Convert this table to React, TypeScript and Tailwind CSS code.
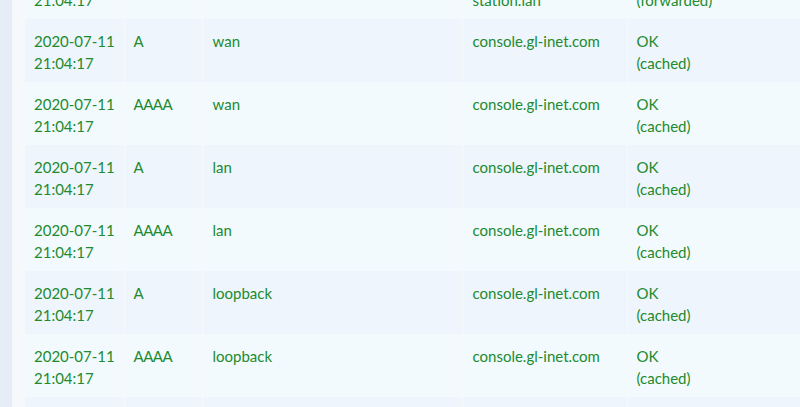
const rows = [
    { time: ['2020-07-11', '21:04:17'], type: 'A', iface: 'lan', domain: ['console.gl-inet.', 'station.lan'], result: ['OK', '(forwarded)'] },
    { time: ['2020-07-11', '21:04:17'], type: 'A', iface: 'wan', domain: ['console.gl-inet.com'], result: ['OK', '(cached)'] },
    { time: ['2020-07-11', '21:04:17'], type: 'AAAA', iface: 'wan', domain: ['console.gl-inet.com'], result: ['OK', '(cached)'] },
    { time: ['2020-07-11', '21:04:17'], type: 'A', iface: 'lan', domain: ['console.gl-inet.com'], result: ['OK', '(cached)'] },
    { time: ['2020-07-11', '21:04:17'], type: 'AAAA', iface: 'lan', domain: ['console.gl-inet.com'], result: ['OK', '(cached)'] },
    { time: ['2020-07-11', '21:04:17'], type: 'A', iface: 'loopback', domain: ['console.gl-inet.com'], result: ['OK', '(cached)'] },
    { time: ['2020-07-11', '21:04:17'], type: 'AAAA', iface: 'loopback', domain: ['console.gl-inet.com'], result: ['OK', '(cached)'] },
    { time: ['2020-07-11', '21:04:17'], type: 'A', iface: 'lan', domain: ['console.gl-inet.com'], result: ['OK', '(cached)'] },
]

function Lines({ lines }: { lines: string[] }) {
    return (
        <>
            {lines.map((l, i) => (
                <div key={i}>{l}</div>
            ))}
        </>
    )
}

export default function App() {
    return (
        <div className="w-[800px] h-[407px] overflow-hidden flex bg-[#e7eef7]" style={{ fontFamily: '"Lato", "Open Sans", sans-serif' }}>
            <div className="w-[12px] shrink-0 bg-[#e6edf7]" />
            <div className="flex-1 bg-[#f6f9fc] pl-[13px] overflow-hidden">
                <table className="-mt-[44px] w-[900px] border-collapse text-[15px] leading-[22px] text-[#218a2f] table-fixed">
                    <colgroup>
                        <col className="w-[99px]" />
                        <col className="w-[78px]" />
                        <col className="w-[260px]" />
                        <col className="w-[165px]" />
                        <col />
                    </colgroup>
                    <tbody>
                        {rows.map((r, i) => (
                            <tr key={i} className={`h-[63px] align-top ${i % 2 === 1 ? 'bg-[#eef5fc]' : 'bg-[#f2fafd]'}`}>
                                <td className="pl-[9px] pt-[11px] border-r border-[#f6fafd]"><Lines lines={r.time} /></td>
                                <td className="pl-[9px] pt-[11px] border-r border-[#f6fafd] tracking-[-0.5px]">{r.type}</td>
                                <td className="pl-[10px] pt-[11px] border-r border-[#f6fafd]">{r.iface}</td>
                                <td className="pl-[10px] pt-[11px] border-r border-[#f6fafd]"><Lines lines={r.domain} /></td>
                                <td className="pl-[9px] pt-[11px]"><Lines lines={r.result} /></td>
                            </tr>
                        ))}
                    </tbody>
                </table>
            </div>
        </div>
    )
}
